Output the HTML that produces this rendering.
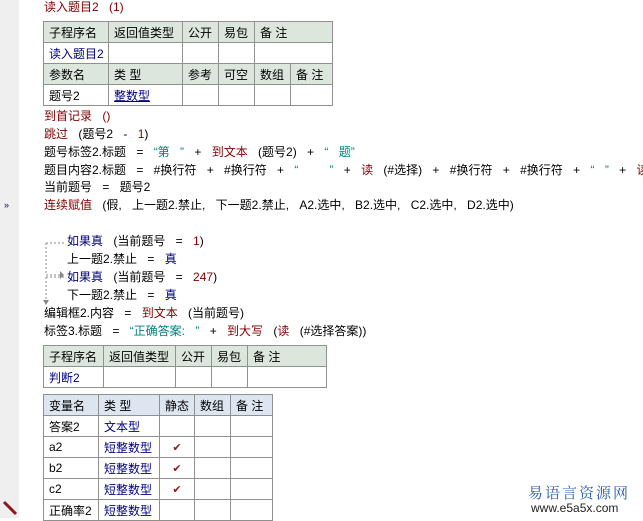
<!DOCTYPE html>
<html><head><meta charset="utf-8"><style>
*{margin:0;padding:0;box-sizing:border-box}
body{width:643px;height:518px;overflow:hidden;background:#fff;position:relative;font-family:"Liberation Sans","WenQuanYi Zen Hei","Noto Sans CJK SC",sans-serif;font-size:12px;color:#000}
.g{position:absolute;left:0;top:0;width:19px;height:518px;background:#efefef}
.l{position:absolute;left:44px;white-space:pre;line-height:18px;height:18px;word-spacing:7px}
.r{color:#800000}.b{color:#000080}.t{color:#008080}.n{color:#800000}
table{position:absolute;border-collapse:collapse;table-layout:fixed}
td{border:1px solid #909090;height:21px;padding:0 5px;white-space:nowrap;overflow:hidden;font-size:12px}
.h td{background:#dde6dd}
.hb td{background:#dde5f0}
.ck{color:#8b1a1a;text-align:center;font-size:11px}
</style></head><body>
<div class="g"></div>
<div class="l r" style="top:-2px">读入题目2 (1)</div>
<table style="left:43px;top:21px;width:289px">
<col style="width:65px"><col style="width:74px"><col style="width:36px"><col style="width:36px"><col style="width:36px"><col style="width:42px">
<tr class="h"><td>子程序名</td><td>返回值类型</td><td>公开</td><td>易包</td><td colspan="2">备 注</td></tr>
<tr><td class="b">读入题目2</td><td></td><td></td><td></td><td colspan="2"></td></tr>
<tr class="h"><td>参数名</td><td>类 型</td><td>参考</td><td>可空</td><td>数组</td><td>备 注</td></tr>
<tr><td>题号2</td><td class="b" style="text-decoration:underline">整数型</td><td></td><td></td><td></td><td></td></tr>
</table>
<div class="l r" style="top:107px">到首记录 ()</div>
<div class="l" style="top:125px"><span class="r">跳过</span> (题号2 - <span class="n">1</span>)</div>
<div class="l" style="top:143px">题号标签2.标题 = <span class="t">“第 ”</span> + <span class="r">到文本</span> (题号2) + <span class="t">“ 题”</span></div>
<div class="l" style="top:161px">题目内容2.标题 = #换行符 + #换行符 + <span class="t">“   ”</span> + <span class="r">读</span> (#选择) + #换行符 + #换行符 + <span class="t">“ ”</span> + <span class="r">读</span></div>
<div class="l" style="top:178px">当前题号 = 题号2</div>
<div class="l" style="top:196px;left:4px;color:#000080;font-size:9px">»</div>
<div class="l r" style="top:196px">连续赋值 <span style="color:#000">(假, 上一题2.禁止, 下一题2.禁止, A2.选中, B2.选中, C2.选中, D2.选中)</span></div>
<svg style="position:absolute;left:40px;top:236px" width="30" height="70">
<path d="M6 7 H24 M6 7 V39 M6 39 H20 M6 41 H24 M6 41 V66" stroke="#888" stroke-dasharray="2 2" fill="none"/>
<path d="M20 35 L24 39 L20 43Z" fill="#888"/><path d="M3 64 L6 69 L9 64Z" fill="#888"/>
</svg>
<div class="l" style="top:232px;left:67px"><span class="b">如果真</span> (当前题号 = <span class="n">1</span>)</div>
<div class="l" style="top:250px;left:67px">上一题2.禁止 = <span class="b">真</span></div>
<div class="l" style="top:268px;left:67px"><span class="b">如果真</span> (当前题号 = <span class="n">247</span>)</div>
<div class="l" style="top:286px;left:67px">下一题2.禁止 = <span class="b">真</span></div>
<div class="l" style="top:304px">编辑框2.内容 = <span class="r">到文本</span> (当前题号)</div>
<div class="l" style="top:322px">标签3.标题 = <span class="t">“正确答案: ”</span> + <span class="r">到大写</span> (<span class="r">读</span> (#选择答案))</div>
<table style="left:43px;top:345px;width:283px">
<col style="width:60px"><col style="width:72px"><col style="width:36px"><col style="width:36px"><col style="width:79px">
<tr class="h"><td>子程序名</td><td>返回值类型</td><td>公开</td><td>易包</td><td>备 注</td></tr>
<tr><td class="b">判断2</td><td></td><td></td><td></td><td></td></tr>
</table>
<table style="left:43px;top:394px;width:229px">
<col style="width:55px"><col style="width:61px"><col style="width:35px"><col style="width:36px"><col style="width:42px">
<tr class="hb"><td>变量名</td><td>类 型</td><td>静态</td><td>数组</td><td>备 注</td></tr>
<tr><td>答案2</td><td class="b">文本型</td><td></td><td></td><td></td></tr>
<tr><td>a2</td><td class="b">短整数型</td><td class="ck">✔</td><td></td><td></td></tr>
<tr><td>b2</td><td class="b">短整数型</td><td class="ck">✔</td><td></td><td></td></tr>
<tr><td>c2</td><td class="b">短整数型</td><td class="ck">✔</td><td></td><td></td></tr>
<tr><td>正确率2</td><td class="b">短整数型</td><td></td><td></td><td></td></tr>
</table>
<svg style="position:absolute;left:2px;top:500px" width="16" height="16"><path d="M2 2 L14 14" stroke="#8b1a1a" stroke-width="3"/></svg>
<div style="position:absolute;left:528px;top:482px;color:#2a5db0;font-size:15px;letter-spacing:2px;font-family:'Noto Serif CJK SC',serif">易语言资源网</div>
<div style="position:absolute;left:531px;top:501px;color:#222;font-size:12px">www.e5a5x.com</div>
</body></html>
